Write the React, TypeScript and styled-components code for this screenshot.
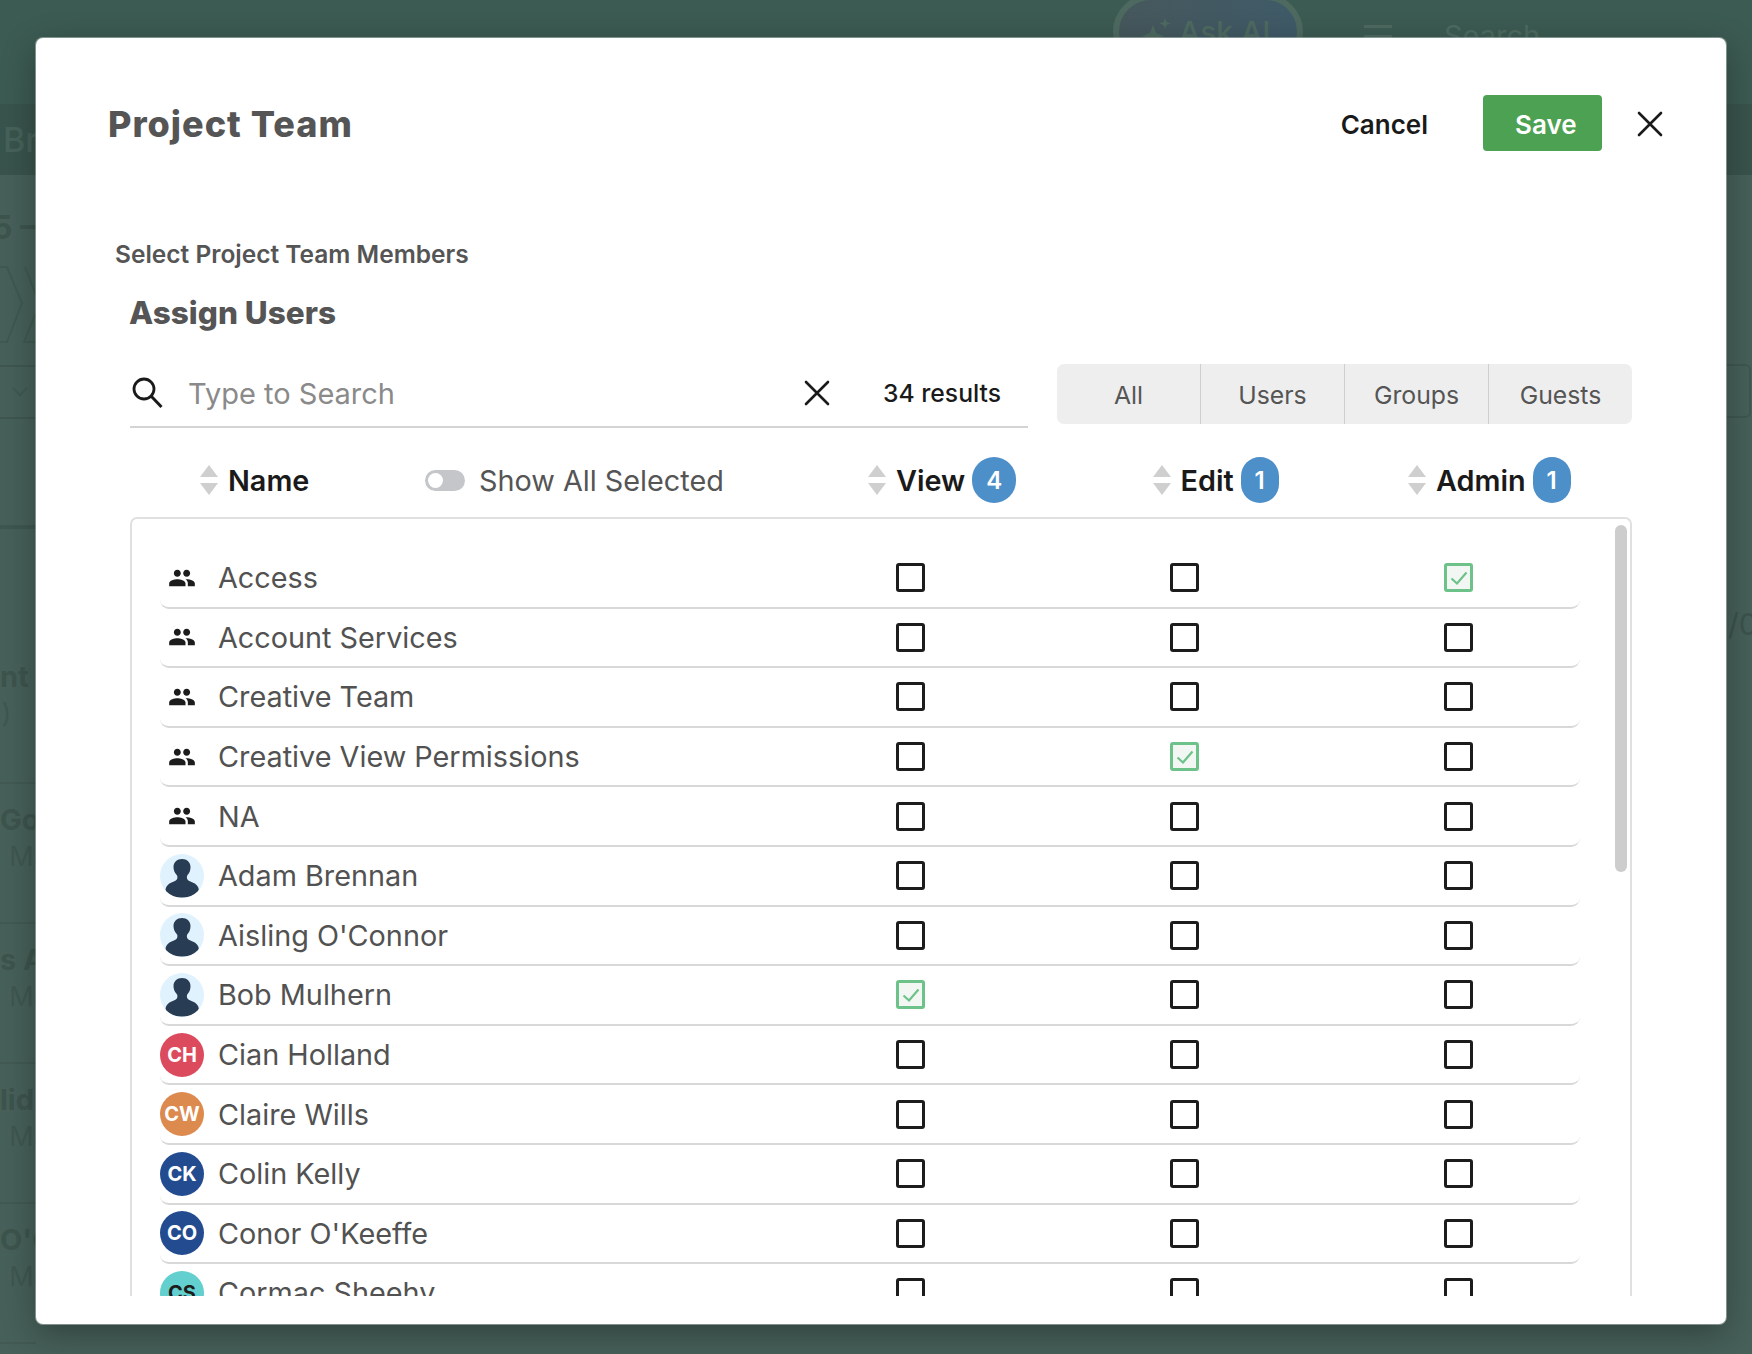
import React from "react";
import styled, { createGlobalStyle } from "styled-components";

const Global = createGlobalStyle`
  html, body { margin: 0; padding: 0; background: #47605a; }
  body { font-family: Inter, "Liberation Sans", sans-serif; overflow: hidden; }
  * { box-sizing: border-box; }
`;

/* ---------- dimmed page behind the dialog ---------- */
const Page = styled.div`
  position: relative;
  width: 1752px;
  height: 1354px;
  overflow: hidden;
  display: flex;
  flex-direction: column;
  background: #47605a;
`;
const TopBar = styled.div`
  height: 104px;
  flex: none;
  background: #3c5b52;
  display: flex;
  align-items: flex-start;
  padding-left: 1113px;
  color: #4e6a60;
`;
const AiPill = styled.div`
  margin-top: -6px;
  width: 190px;
  height: 76px;
  border: 6px solid #4e6a60;
  border-radius: 38px;
  background: linear-gradient(90deg, #46585c, #3f5a68);
  display: flex;
  align-items: center;
  gap: 8px;
  padding-left: 22px;
  font-size: 30px;
  font-weight: 500;
  flex: none;
`;
const Burger = styled.div`
  margin: 25px 0 0 61px;
  width: 28px;
  height: 22px;
  border-top: 3px solid #4e6a60;
  flex: none;
  &::after {
    content: "";
    display: block;
    margin-top: 7px;
    border-top: 3px solid #4e6a60;
  }
`;
const TopSearch = styled.div`
  margin: 18px 0 0 52px;
  font-size: 29px;
  line-height: 36px;
`;
const Band = styled.div`
  height: 71px;
  flex: none;
  background: #39544c;
  color: #46625a;
  display: flex;
  align-items: center;
  padding-left: 3px;
  font-size: 34px;
  font-weight: 500;
`;
const Main = styled.div`
  flex: 1;
  display: flex;
  justify-content: space-between;
  min-height: 0;
`;
const LeftStrip = styled.div`
  width: 36px;
  display: flex;
  flex-direction: column;
  overflow: hidden;
`;
const RightStrip = styled.div`
  width: 25px;
  display: flex;
  flex-direction: column;
  overflow: hidden;
  color: #3c534c;
`;
const StripHeading = styled.div`
  height: 90px;
  flex: none;
  padding-top: 35px;
  display: flex;
  justify-content: flex-end;
  white-space: nowrap;
  font-size: 32px;
  line-height: 36px;
  font-weight: 700;
  color: #3d544d;
`;
const StripChevrons = styled.svg`
  display: block;
  flex: none;
  height: 100px;
  width: 36px;
`;
const StripFilter = styled.div`
  height: 54px;
  flex: none;
  border-top: 2px solid #3f5750;
  border-bottom: 2px solid #3f5750;
  display: flex;
  align-items: center;
  padding-left: 12px;
`;
const StripRule = styled.div`
  flex: none;
  height: 110px;
  border-bottom: 4px solid #3e5750;
`;
const StripItem = styled.div<{ $lead?: number }>`
  flex: none;
  height: ${(p) => (p.$lead ? 255 : 140)}px;
  display: flex;
  flex-direction: column;
  border-bottom: 2px solid #425a53;
  padding-top: ${(p) => (p.$lead ? p.$lead : 18)}px;
`;
const StripTitle = styled.div`
  white-space: nowrap;
  font-size: 29px;
  line-height: 36px;
  font-weight: 700;
  color: #3d544d;
`;
const StripSub = styled.div`
  margin: 1px 0 0 -6px;
  white-space: nowrap;
  font-size: 27px;
  line-height: 36px;
  color: #3f5750;
`;
const RightBox = styled.div`
  margin-top: 189px;
  height: 54px;
  width: 24px;
  flex: none;
  border: 2px solid #3f5750;
  border-left: 0;
  border-radius: 0 6px 6px 0;
`;
const RightFrac = styled.div`
  margin-top: 188px;
  font-size: 30px;
  line-height: 36px;
  white-space: nowrap;
  padding-left: 1px;
`;

/* ---------- dialog ---------- */
const Modal = styled.div`
  position: absolute;
  left: 36px;
  top: 38px;
  width: 1690px;
  height: 1286px;
  background: #fff;
  border-radius: 7px;
  box-shadow: 0 0 0 1px rgba(190, 200, 196, 0.55), 0 10px 34px rgba(0, 0, 0, 0.32);
  display: flex;
  flex-direction: column;
  overflow: hidden;
`;
const Header = styled.header`
  flex: none;
  display: flex;
  align-items: center;
  justify-content: space-between;
  margin-top: 57px;
  padding: 0 63px 0 72px;
  height: 56px;
`;
const Title = styled.h1`
  margin: 0;
  padding-top: 2px;
  font-size: 36px;
  font-weight: 800;
  letter-spacing: 1px;
  color: #555;
`;
const Actions = styled.div`
  display: flex;
  align-items: center;
`;
const CancelButton = styled.button`
  border: 0;
  background: none;
  padding: 2px 0 0;
  font: 600 26px Inter, sans-serif;
  color: #1a1a1a;
  margin-right: 55px;
`;
const SaveButton = styled.button`
  border: 0;
  width: 119px;
  height: 56px;
  background: #4ca152;
  border-radius: 4px;
  color: #fff;
  font: 600 26px Inter, sans-serif;
  text-align: left;
  padding: 2px 0 0 32px;
  margin-right: 35px;
`;
const CloseIcon = styled.svg`
  display: block;
  width: 26px;
  height: 26px;
  margin-top: 2px;
`;
const SectionLabel = styled.div`
  flex: none;
  margin: 89px 0 0 79px;
  font-size: 24.5px;
  line-height: 29px;
  font-weight: 600;
  color: #555;
`;
const Section = styled.section`
  flex: 1;
  min-height: 0;
  margin: 0 94px 28px 94px;
  display: flex;
  flex-direction: column;
`;
const SectionTitle = styled.h2`
  margin: 26px 0 0 -1px;
  font-size: 31.5px;
  line-height: 36px;
  font-weight: 800;
  color: #555;
`;
const SearchRow = styled.div`
  flex: none;
  margin-top: 33px;
  display: flex;
  align-items: flex-start;
  height: 64px;
`;
const SearchField = styled.div`
  width: 899px;
  height: 64px;
  border-bottom: 2px solid #d4d4d4;
  display: flex;
  align-items: center;
  padding: 0 0 4px 2px;
`;
const SearchIcon = styled.svg`
  width: 31px;
  height: 32px;
  flex: none;
`;
const SearchText = styled.div`
  margin-left: 25px;
  flex: 1;
  font-size: 29px;
  color: #8a8a8a;
`;
const ClearIcon = styled.svg`
  width: 26px;
  height: 26px;
  flex: none;
  margin-right: 198px;
`;
const Results = styled.div`
  margin-left: -145px;
  width: 116px;
  flex: none;
  padding-top: 15px;
  line-height: 28px;
  font-size: 24.7px;
  font-weight: 500;
  color: #1a1a1a;
  white-space: nowrap;
`;
const Tabs = styled.div`
  margin-left: 58px;
  width: 575px;
  height: 60px;
  flex: none;
  display: flex;
  background: #eeeeee;
  border-radius: 7px;
`;
const Tab = styled.div`
  flex: 1;
  display: flex;
  align-items: center;
  justify-content: center;
  padding-top: 1px;
  font-size: 24.8px;
  color: #555;
  border-right: 1.5px solid #cfcfcf;
  &:last-child { border-right: 0; }
`;
const ColumnHeader = styled.div`
  flex: none;
  height: 46px;
  margin-top: 29px;
  padding-left: 70px;
  display: grid;
  grid-template-columns: 225px 443px 284.5px 255.5px 1fr;
  align-items: center;
`;
const HeaderCell = styled.div`
  display: flex;
  align-items: center;
`;
const SortIcon = styled.svg`
  width: 18px;
  height: 30px;
  flex: none;
  margin-right: 10px;
`;
const ColumnName = styled.span`
  font-size: 28.8px;
  font-weight: 600;
  color: #1a1a1a;
`;
const CountBadge = styled.span<{ $wide?: boolean }>`
  width: ${(p) => (p.$wide ? 44 : 38)}px;
  height: 46px;
  margin-left: 7px;
  border-radius: 23px;
  background: #4d8fc9;
  color: #fff;
  font-size: 24px;
  font-weight: 600;
  display: flex;
  align-items: center;
  justify-content: center;
`;
const Toggle = styled.span`
  width: 40px;
  height: 21px;
  border-radius: 11px;
  background: #c4c6c9;
  display: flex;
  align-items: center;
  padding-left: 3px;
  margin-right: 14px;
  flex: none;
  &::before {
    content: "";
    width: 15px;
    height: 15px;
    border-radius: 50%;
    background: #fff;
  }
`;
const ToggleLabel = styled.span`
  font-size: 28.8px;
  color: #555;
  white-space: nowrap;
`;
const ListBox = styled.div`
  position: relative;
  flex: 1;
  min-height: 0;
  margin-top: 14px;
  border: 2px solid #e0e0e0;
  border-bottom: 0;
  border-radius: 7px 7px 0 0;
  padding: 30px 50px 0 28px;
  overflow: hidden;
`;
const Scrollbar = styled.div`
  position: absolute;
  top: 6px;
  right: 3px;
  width: 12px;
  height: 347px;
  border-radius: 6px;
  background: #cdcdcd;
`;
const Row = styled.div`
  height: 59.6px;
  border-bottom: 2px solid #d8d8d8;
  border-radius: 0 0 9px 9px;
  display: grid;
  grid-template-columns: 1fr 243px 243px 243px;
  column-gap: 31px;
  align-items: center;
`;
const NameCell = styled.div`
  display: flex;
  align-items: center;
  min-width: 0;
`;
const IconSlot = styled.span`
  width: 44px;
  height: 44px;
  flex: none;
  display: flex;
  align-items: center;
  justify-content: center;
  margin-right: 14px;
`;
const GroupIcon = styled.svg`
  width: 28px;
  height: 28px;
  display: block;
`;
const Avatar = styled.span<{ $bg: string; $fg?: string }>`
  width: 44px;
  height: 44px;
  border-radius: 50%;
  background: ${(p) => p.$bg};
  color: ${(p) => p.$fg || "#fff"};
  font-size: 20px;
  font-weight: 700;
  display: flex;
  align-items: center;
  justify-content: center;
  overflow: hidden;
`;
const PersonSvg = styled.svg`
  width: 44px;
  height: 44px;
  display: block;
`;
const RowName = styled.span`
  font-size: 28.8px;
  color: #525252;
  white-space: nowrap;
`;
const Check = styled.span<{ $on?: boolean }>`
  justify-self: center;
  width: 29px;
  height: 29px;
  border: 3.5px solid ${(p) => (p.$on ? "#6cc288" : "#1c1c1c")};
  border-radius: 3px;
  background: ${(p) => (p.$on ? "#f3f7f4" : "#fff")};
  display: flex;
  align-items: center;
  justify-content: center;
`;
const CheckMark = styled.svg`
  width: 20px;
  height: 20px;
  display: block;
`;

const X = () => <path d="M2 2 L24 24 M24 2 L2 24" stroke="#1a1a1a" strokeWidth="2.6" fill="none" strokeLinecap="round" />;

const Sort = () => (
  <SortIcon viewBox="0 0 18 30">
    <polygon points="9,0 18,12 0,12" fill="#cfcfcf" />
    <polygon points="0,18 18,18 9,30" fill="#cfcfcf" />
  </SortIcon>
);

const Group = () => (
  <GroupIcon viewBox="0 0 24 24">
    <path
      fill="#1c1c1c"
      d="M16 11c1.66 0 2.99-1.34 2.99-3S17.66 5 16 5c-1.66 0-3 1.34-3 3s1.34 3 3 3zm-8 0c1.66 0 2.99-1.34 2.99-3S9.66 5 8 5C6.34 5 5 6.34 5 8s1.34 3 3 3zm0 2c-2.33 0-7 1.17-7 3.5V19h14v-2.5c0-2.33-4.67-3.5-7-3.5zm8 0c-.29 0-.62.02-.97.05 1.16.84 1.97 1.97 1.97 3.45V19h6v-2.5c0-2.33-4.67-3.5-7-3.5z"
    />
  </GroupIcon>
);

const Person = () => (
  <Avatar $bg="#e0f2fe">
    <PersonSvg viewBox="0 0 44 44">
      <path
        fill="#283c54"
        d="M22 5c-5 0-8.500 3.500-8.500 8 0 3 1.200 6 3.200 8 .8 1 .9 2.600.4 4-1 2.200-5 3-7.600 4.500C7.500 31 5.500 33 5.500 36 7 41 14 43.500 22 43.500S37 41 38.800 36c0-3-2-5-4-6.500-2.600-1.500-6.600-2.300-7.600-4.500-.5-1.400-.4-3 .4-4 2-2 2.900-5 2.900-8 0-4.500-3.500-8-8.500-8z"
      />
    </PersonSvg>
  </Avatar>
);

type RowData = {
  name: string;
  kind: "group" | "person" | "initials";
  initials?: string;
  bg?: string;
  fg?: string;
  on?: number;
};

const rows: RowData[] = [
  { name: "Access", kind: "group", on: 2 },
  { name: "Account Services", kind: "group" },
  { name: "Creative Team", kind: "group" },
  { name: "Creative View Permissions", kind: "group", on: 1 },
  { name: "NA", kind: "group" },
  { name: "Adam Brennan", kind: "person" },
  { name: "Aisling O'Connor", kind: "person" },
  { name: "Bob Mulhern", kind: "person", on: 0 },
  { name: "Cian Holland", kind: "initials", initials: "CH", bg: "#dc4a5e" },
  { name: "Claire Wills", kind: "initials", initials: "CW", bg: "#dd8a4f" },
  { name: "Colin Kelly", kind: "initials", initials: "CK", bg: "#234c90" },
  { name: "Conor O'Keeffe", kind: "initials", initials: "CO", bg: "#234c90" },
  { name: "Cormac Sheehy", kind: "initials", initials: "CS", bg: "#63cfcf", fg: "#1c1c1c" },
];

export default function App() {
  return (
    <Page>
      <Global />
      <TopBar>
        <AiPill>
          <svg width="30" height="30" viewBox="0 0 30 30">
            <path fill="#4e6a60" d="M12 8l3 8 8 3-8 3-3 8-3-8-8-3 8-3zM24 1l1.500 4 4 1.500-4 1.500-1.500 4-1.500-4-4-1.500 4-1.500z" />
          </svg>
          Ask AI
        </AiPill>
        <Burger />
        <TopSearch>Search</TopSearch>
      </TopBar>
      <Band>Br</Band>
      <Main>
        <LeftStrip>
          <StripHeading>5 –</StripHeading>
          <StripChevrons viewBox="0 0 36 100">
            <path d="M0 2H7L22 38 7 77H0M25 2L36 30M36 48L24 77H36" stroke="#3e5a51" strokeWidth="2" fill="none" />
          </StripChevrons>
          <StripFilter>
            <svg width="16" height="10" viewBox="0 0 16 10">
              <path d="M1 1l7 7 7-7" stroke="#3e5a51" strokeWidth="2" fill="none" />
            </svg>
          </StripFilter>
          <StripRule />
          <StripItem $lead={130}>
            <StripTitle>nt I</StripTitle>
            <StripSub>&nbsp;)</StripSub>
          </StripItem>
          <StripItem>
            <StripTitle>Good</StripTitle>
            <StripSub>: Ma</StripSub>
          </StripItem>
          <StripItem>
            <StripTitle>s A</StripTitle>
            <StripSub>: Ma</StripSub>
          </StripItem>
          <StripItem>
            <StripTitle>lid</StripTitle>
            <StripSub>: Ma</StripSub>
          </StripItem>
          <StripItem>
            <StripTitle>O'C</StripTitle>
            <StripSub>: Ma</StripSub>
          </StripItem>
        </LeftStrip>
        <RightStrip>
          <RightBox />
          <RightFrac>/0</RightFrac>
        </RightStrip>
      </Main>

      <Modal>
        <Header>
          <Title>Project Team</Title>
          <Actions>
            <CancelButton>Cancel</CancelButton>
            <SaveButton>Save</SaveButton>
            <CloseIcon viewBox="0 0 26 26"><X /></CloseIcon>
          </Actions>
        </Header>
        <SectionLabel>Select Project Team Members</SectionLabel>
        <Section>
          <SectionTitle>Assign Users</SectionTitle>
          <SearchRow>
            <SearchField>
              <SearchIcon viewBox="0 0 31 32">
                <circle cx="12" cy="12" r="10" stroke="#1a1a1a" strokeWidth="2.8" fill="none" />
                <path d="M19.500 19.500L29.500 30" stroke="#1a1a1a" strokeWidth="3" fill="none" />
              </SearchIcon>
              <SearchText>Type to Search</SearchText>
              <ClearIcon viewBox="0 0 26 26"><X /></ClearIcon>
            </SearchField>
            <Results>34 results</Results>
            <Tabs>
              <Tab>All</Tab>
              <Tab>Users</Tab>
              <Tab>Groups</Tab>
              <Tab>Guests</Tab>
            </Tabs>
          </SearchRow>
          <ColumnHeader>
            <HeaderCell><Sort /><ColumnName>Name</ColumnName></HeaderCell>
            <HeaderCell><Toggle /><ToggleLabel>Show All Selected</ToggleLabel></HeaderCell>
            <HeaderCell><Sort /><ColumnName>View</ColumnName><CountBadge $wide>4</CountBadge></HeaderCell>
            <HeaderCell><Sort /><ColumnName>Edit</ColumnName><CountBadge>1</CountBadge></HeaderCell>
            <HeaderCell><Sort /><ColumnName>Admin</ColumnName><CountBadge>1</CountBadge></HeaderCell>
          </ColumnHeader>
          <ListBox>
            <Scrollbar />
            {rows.map((r) => (
              <Row key={r.name}>
                <NameCell>
                  <IconSlot>
                    {r.kind === "group" && <Group />}
                    {r.kind === "person" && <Person />}
                    {r.kind === "initials" && <Avatar $bg={r.bg!} $fg={r.fg}>{r.initials}</Avatar>}
                  </IconSlot>
                  <RowName>{r.name}</RowName>
                </NameCell>
                {[0, 1, 2].map((c) => (
                  <Check key={c} $on={r.on === c}>
                    {r.on === c && (
                      <CheckMark viewBox="0 0 20 20">
                        <path d="M2.500 10.500L8 15.500 17.500 4.500" stroke="#6cc288" strokeWidth="2.200" fill="none" />
                      </CheckMark>
                    )}
                  </Check>
                ))}
              </Row>
            ))}
          </ListBox>
        </Section>
      </Modal>
    </Page>
  );
}
